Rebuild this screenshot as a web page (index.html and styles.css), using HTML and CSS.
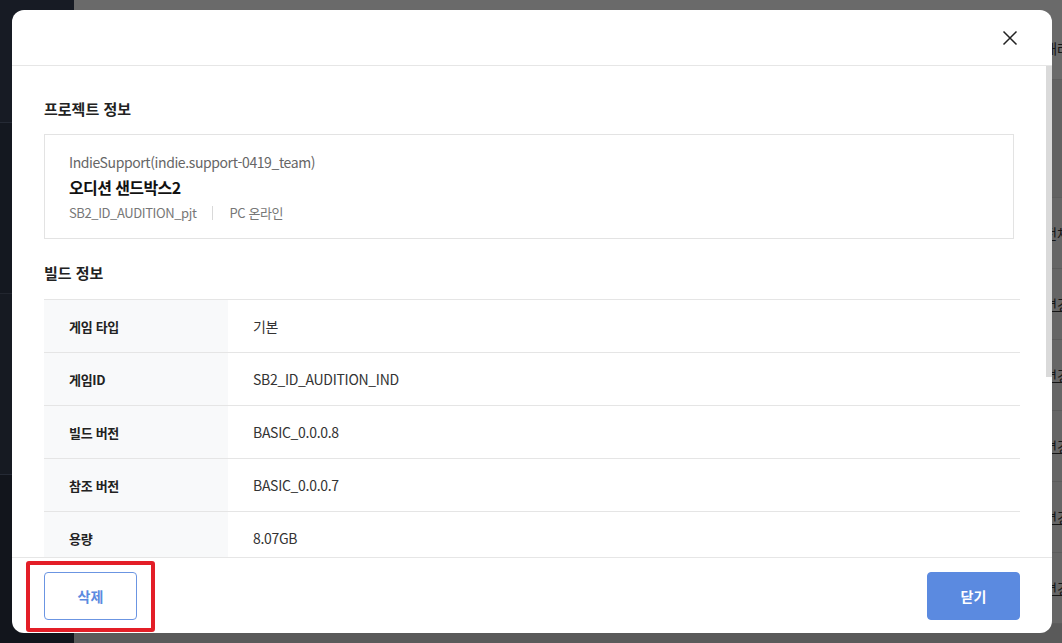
FILE: index.html
```html
<!DOCTYPE html>
<html lang="ko">
<head>
<meta charset="utf-8">
<title>빌드 정보</title>
<link rel="stylesheet" href="styles.css">
</head>
<body>
<div class="page">
  <aside class="sidebar">
    <div class="side-top"></div>
    <div class="side-mid"></div>
    <div class="side-low"></div>
    <div class="side-bottom"></div>
  </aside>
  <main class="main">
    <div class="main-head"><span class="frag">패러</span></div>
    <div class="main-band"></div>
    <div class="main-row"><span class="frag">전체</span></div>
    <div class="main-row"><span class="frag link">변경</span></div>
    <div class="main-row"><span class="frag link">변경</span></div>
    <div class="main-row"><span class="frag link">변경</span></div>
    <div class="main-row"><span class="frag link">변경</span></div>
    <div class="main-row"><span class="frag link">변경</span></div>
    <div class="main-foot"></div>
  </main>
</div>

<div class="modal">
  <header class="modal-head">
    <button class="close" aria-label="닫기">
      <svg width="16" height="16" viewBox="0 0 16 16"><path d="M1.5 1.5 L14.5 14.5 M14.5 1.5 L1.5 14.5" stroke="#222" stroke-width="1.5" fill="none"/></svg>
    </button>
  </header>
  <div class="modal-body">
    <h3 class="sec-title">프로젝트 정보</h3>
    <div class="proj-box">
      <div class="proj-team">IndieSupport(indie.support-0419_team)</div>
      <div class="proj-name">오디션 샌드박스2</div>
      <div class="proj-meta"><span>SB2_ID_AUDITION_pjt</span><span class="sep"></span><span>PC 온라인</span></div>
    </div>
    <h3 class="sec-title sec-gap">빌드 정보</h3>
    <div class="info-table">
      <div class="info-row"><div class="info-label">게임 타입</div><div class="info-value">기본</div></div>
      <div class="info-row"><div class="info-label">게임ID</div><div class="info-value">SB2_ID_AUDITION_IND</div></div>
      <div class="info-row"><div class="info-label">빌드 버전</div><div class="info-value">BASIC_0.0.0.8</div></div>
      <div class="info-row"><div class="info-label">참조 버전</div><div class="info-value">BASIC_0.0.0.7</div></div>
      <div class="info-row"><div class="info-label">용량</div><div class="info-value">8.07GB</div></div>
    </div>
  </div>
  <div class="scroll-thumb"></div>
  <footer class="modal-foot">
    <button class="btn btn-outline">삭제</button>
    <button class="btn btn-primary">닫기</button>
  </footer>
</div>

<div class="annot"></div>
</body>
</html>
```

FILE: styles.css
```css
* { box-sizing: border-box; }
html, body { margin: 0; padding: 0; }
body {
  width: 1062px;
  height: 643px;
  overflow: hidden;
  font-family: "Noto Sans CJK KR", "Noto Sans", sans-serif;
  color: #222;
  background: #666;
}

/* background page (dimmed) */
.page {
  display: flex;
  height: 643px;
}
.sidebar {
  width: 74px;
  background: #161a23;
  display: flex;
  flex-direction: column;
}
.side-top { height: 123px; border-bottom: 1px solid #252a35; background: #171b24; }
.side-mid { height: 170px; background: #141820; }
.side-low { height: 182px; border-top: 1px solid #22262f; border-bottom: 1px solid #252a35; background: #161a22; }
.side-bottom { flex: 1; background: #12151c; }

.main {
  flex: 1;
  display: flex;
  flex-direction: column;
  background: #666;
}
.main-head {
  height: 80px;
  background: #6a6a6a;
  border-bottom: 1px solid #5e5e5e;
  display: flex;
  align-items: center;
  justify-content: flex-end;
  padding-top: 16px;
}
.main-band { height: 118px; background: #626262; border-bottom: 1px solid #5d5d5d; }
.main-row {
  height: 71px;
  border-bottom: 1px solid #5c5c5c;
  display: flex;
  align-items: center;
  justify-content: flex-end;
  background: #666;
}
.main-foot { flex: 1; background: #5a5a5a; }
.frag {
  font-size: 14px;
  color: #151515;
  margin-right: -8px;
  white-space: nowrap;
}
.frag.link { text-decoration: underline; }

/* modal */
.modal {
  position: absolute;
  left: 12px;
  top: 10px;
  width: 1040px;
  height: 623px;
  background: #fff;
  border-radius: 12px;
  display: flex;
  flex-direction: column;
  overflow: hidden;
}
.modal-head {
  height: 56px;
  flex: none;
  border-bottom: 1px solid #e6e6e6;
  display: flex;
  align-items: center;
  justify-content: flex-end;
  padding-right: 34px;
}
.close {
  border: 0;
  background: none;
  padding: 0;
  width: 16px;
  height: 16px;
  display: flex;
  margin-top: 1px;
}
.modal-body {
  flex: 1;
  overflow: hidden;
  padding: 32px 32px 0 32px;
}
.scroll-thumb {
  position: absolute;
  left: 1034px;
  top: 56px;
  width: 6px;
  height: 311px;
  background: #dadada;
}

.sec-title {
  margin: 0 0 14px;
  font-size: 15px;
  line-height: 22px;
  font-weight: 700;
  color: #222;
}
.sec-title.sec-gap { margin-top: 23px; margin-bottom: 15px; }

.proj-box {
  border: 1px solid #e3e3e3;
  margin-right: 6px;
  padding: 16px 24px 14px;
}
.proj-team { font-size: 14px; line-height: 22px; color: #666; letter-spacing: -0.4px; }
.proj-name { font-size: 16px; line-height: 28px; font-weight: 700; color: #111; letter-spacing: -0.6px; }
.proj-meta {
  display: flex;
  align-items: center;
  font-size: 13px;
  line-height: 22px;
  color: #777;
  margin-top: 1px;
  letter-spacing: -0.4px;
}
.sep {
  width: 1px;
  height: 14px;
  background: #d9d9d9;
  margin: 0 16px;
}

.info-table { border-top: 1px solid #e5e5e5; }
.info-row {
  display: flex;
  height: 53px;
  border-bottom: 1px solid #e5e5e5;
  font-size: 14px;
}
.info-label {
  width: 184px;
  background: #f8f9fa;
  padding-left: 25px;
  display: flex;
  align-items: center;
  font-size: 13px;
  font-weight: 700;
  color: #222;
  letter-spacing: -0.3px;
}
.info-value {
  flex: 1;
  padding-left: 25px;
  display: flex;
  align-items: center;
  color: #333;
  letter-spacing: -0.3px;
}

.modal-foot {
  flex: none;
  height: 76px;
  border-top: 1px solid #e6e6e6;
  display: flex;
  justify-content: space-between;
  align-items: flex-start;
  padding: 14px 32px 0 32px;
}
.btn {
  width: 93px;
  height: 48px;
  border-radius: 4px;
  font-family: inherit;
  font-size: 14px;
  font-weight: 700;
  cursor: pointer;
}
.btn-outline {
  background: #fff;
  border: 1px solid #6b95e2;
  color: #5b8ae0;
}
.btn-primary {
  background: #5b8ae0;
  border: 1px solid #5b8ae0;
  color: #fff;
}

/* red annotation box */
.annot {
  position: absolute;
  left: 26px;
  top: 561px;
  width: 129px;
  height: 71px;
  border: 4px solid #e31e27;
  border-radius: 3px;
}
```
